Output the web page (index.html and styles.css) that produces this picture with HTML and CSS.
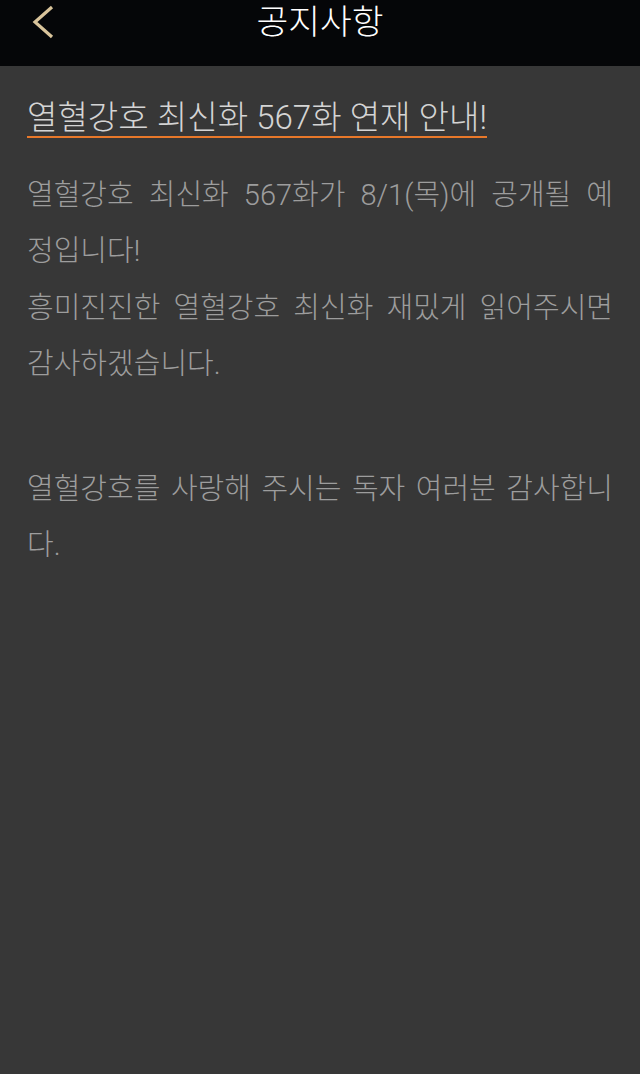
FILE: index.html
```html
<!DOCTYPE html>
<html lang="ko">
<head>
<meta charset="utf-8">
<title>공지사항</title>
<link rel="stylesheet" href="styles.css">
</head>
<body>
<header class="topbar">
  <button class="back" aria-label="뒤로">
    <svg class="back-icon" width="26" height="36" viewBox="0 0 26 36">
      <path d="M22 3 L5 18 L22 33" fill="none" stroke="#d9c49b" stroke-width="3.2"/>
    </svg>
  </button>
  <h1 class="topbar-title">공지사항</h1>
  <span class="spacer"></span>
</header>
<main class="notice">
  <h2 class="notice-title"><span class="notice-title-text">열혈강호 최신화 567화 연재 안내!</span></h2>
  <div class="notice-body">
    <p class="para"><span class="jline">열혈강호 최신화 567화가 8/1(목)에 공개될 예</span>정입니다!</p>
    <p class="para para-next"><span class="jline">흥미진진한 열혈강호 최신화 재밌게 읽어주시면</span>감사하겠습니다.</p>
    <p class="para para-gap"><span class="jline">열혈강호를 사랑해 주시는 독자 여러분 감사합니</span>다.</p>
  </div>
</main>
</body>
</html>
```
FILE: styles.css
```css
html, body {
  margin: 0;
  padding: 0;
}
body {
  background: #373737;
  min-height: 1074px;
  font-family: Roboto, "Noto Sans CJK KR", sans-serif;
}
.topbar {
  height: 66px;
  background: #050608;
  display: grid;
  grid-template-columns: 1fr auto 1fr;
  align-items: start;
}
.back {
  justify-self: start;
  background: none;
  border: 0;
  padding: 4px 0 0 30px;
  margin: 0;
  display: flex;
}
.back-icon {
  display: block;
}
.topbar-title {
  margin: 0;
  font-size: 34.5px;
  line-height: 44px;
  font-weight: 300;
  color: #ffffff;
}
.notice {
  padding: 33px 27px 0 27px;
}
.notice-title {
  margin: 0;
  font-size: 33.1px;
  line-height: 37px;
  font-weight: 300;
  color: #d4d4d4;
}
.notice-title-text {
  display: inline-block;
  border-bottom: 2px solid #e8782a;
}
.notice-body {
  margin-top: 30px;
  font-size: 29px;
  line-height: 55.5px;
  font-weight: 300;
  color: #9d9d9d;
}
.para {
  margin: 0;
}
.para-next {
  margin-top: 2px;
}
.jline {
  display: block;
  text-align: justify;
  text-align-last: justify;
  text-justify: inter-word;
}
.para-gap {
  margin-top: 70px;
}
```
